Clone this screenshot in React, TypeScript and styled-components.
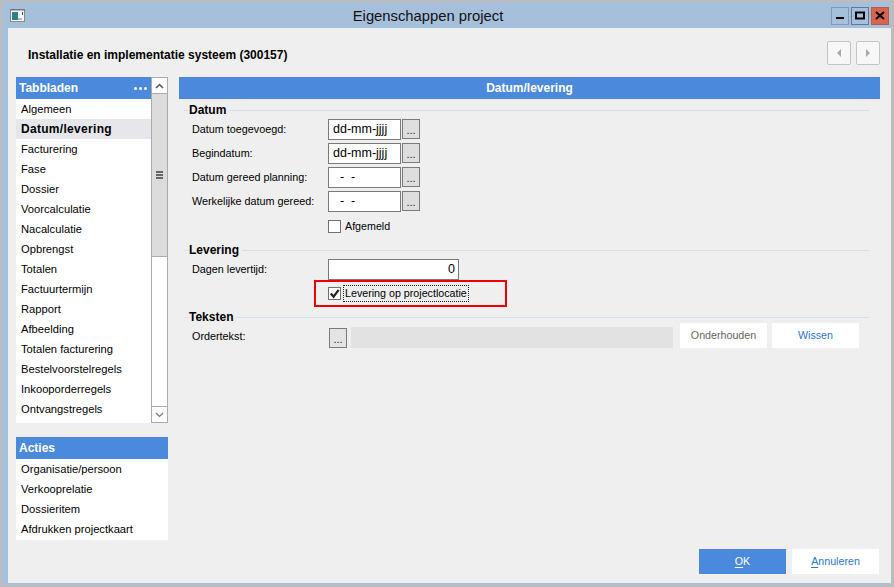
import { createGlobalStyle } from "styled-components";
import styled from "styled-components";

const GlobalStyle = createGlobalStyle`
  html, body { margin: 0; padding: 0; background: #bcbcbc; }
  body { font-family: "Liberation Sans", Arial, sans-serif; font-size: 12px; color: #000; }
`;

/* ── Window frame ── */

const Win = styled.div`
  width: 894px;
  height: 587px;
  box-sizing: border-box;
  padding: 2px 3px 2px 2px;
  background: #bcbcbc;
  overflow: hidden;
`;

const Frame = styled.div`
  height: 583px;
  box-sizing: border-box;
  padding: 0 0 2px 6px;
  background: #a6c0dc;
  display: flex;
  flex-direction: column;
`;

const TitleBar = styled.div`
  height: 26px;
  flex: none;
  display: flex;
  align-items: center;
  position: relative;
`;

const AppIcon = styled.svg`
  width: 15px;
  height: 13px;
  margin: 1px 0 0 2px;
`;

const Title = styled.div`
  position: absolute;
  left: 0;
  right: 0;
  top: 0;
  line-height: 29px;
  text-align: center;
  font-size: 14.8px;
  color: #111;
  padding-right: 43px;
`;

const WinButtons = styled.div`
  margin: 2px 2px 0 auto;
  display: flex;
  gap: 2px;
`;

const WinButton = styled.div<{ $kind?: "max" | "close" }>`
  width: 18px;
  height: 18px;
  box-sizing: border-box;
  display: flex;
  align-items: center;
  justify-content: center;
  border: 1px solid ${({ $kind }) => ($kind === "close" ? "#b85a48" : $kind === "max" ? "#5f7a97" : "#7f9ab8")};
  background: ${({ $kind }) => ($kind === "close" ? "#d8654f" : "#a6c0dc")};
`;

const Client = styled.div`
  flex: 1;
  background: #efefef;
  display: flex;
  flex-direction: column;
  padding: 0 11px 9px 8px;
  min-height: 0;
`;

/* ── Project header ── */

const ProjectRow = styled.div`
  height: 49px;
  flex: none;
  display: flex;
  align-items: center;
  padding-left: 12px;
`;

const ProjectName = styled.div`
  font-weight: bold;
  font-size: 12px;
  margin-top: 4px;
`;

const NavButtons = styled.div`
  margin-left: auto;
  display: flex;
  gap: 5px;
`;

const NavButton = styled.div`
  width: 24px;
  height: 24px;
  box-sizing: border-box;
  border: 1px solid #c4c4c4;
  border-radius: 2px;
  background: #f7f7f7;
  display: flex;
  align-items: center;
  justify-content: center;
`;

const Body = styled.div`
  flex: 1;
  display: flex;
  gap: 11px;
  min-height: 0;
`;

/* ── Left column ── */

const Side = styled.div`
  width: 152px;
  flex: none;
  display: flex;
  flex-direction: column;
  gap: 14px;
`;

const SideList = styled.div`
  display: flex;
  background: #fff;
  height: 346px;
`;

const SideItems = styled.div`
  flex: 1;
  min-width: 0;
`;

const SideHead = styled.div`
  height: 22px;
  background: #4a89dc;
  color: #fff;
  font-weight: bold;
  font-size: 12px;
  line-height: 22px;
  padding-left: 3px;
  display: flex;
  align-items: center;
  justify-content: space-between;
`;

const Dots = styled.span`
  display: flex;
  gap: 2px;
  margin-right: 4px;
  & > i { width: 3px; height: 3px; border-radius: 50%; background: #fff; }
`;

const SideItem = styled.div<{ $active?: boolean }>`
  height: 20px;
  line-height: 20px;
  padding-left: 5px;
  font-size: ${({ $active }) => ($active ? "12px" : "11.2px")};
  letter-spacing: ${({ $active }) => ($active ? "0.3px" : "0")};
  white-space: nowrap;
  background: ${({ $active }) => ($active ? "#e6e7ea" : "transparent")};
  font-weight: ${({ $active }) => ($active ? "bold" : "normal")};
`;

const ActionBox = styled.div`
  background: #fff;
  padding-bottom: 1px;
`;

const Scroll = styled.div`
  width: 17px;
  flex: none;
  box-sizing: border-box;
  border: 1px solid #ababab;
  border-top: none;
  border-bottom: none;
  display: flex;
  flex-direction: column;
  background: #fff;
`;

const ScrollEnd = styled.div`
  height: 17px;
  flex: none;
  margin: 0 -1px;
  box-sizing: border-box;
  border: 1px solid #ababab;
  background: #fff;
  display: flex;
  align-items: center;
  justify-content: center;
`;

const ScrollThumb = styled.div`
  height: 163px;
  flex: none;
  background: #dcdcdc;
  border-bottom: 1px solid #ababab;
  box-sizing: border-box;
  display: flex;
  align-items: center;
  justify-content: center;
`;

const ScrollGap = styled.div`
  flex: 1;
`;

/* ── Main panel ── */

const Main = styled.div`
  flex: 1;
  min-width: 0;
  display: flex;
  flex-direction: column;
`;

const MainHead = styled.div`
  height: 22px;
  flex: none;
  background: #4a89dc;
  color: #fff;
  font-weight: bold;
  font-size: 12px;
  line-height: 22px;
  text-align: center;
`;

const Form = styled.div`
  flex: 1;
  min-height: 0;
  display: flex;
  flex-direction: column;
  padding: 4px 11px 0 2px;
`;

const Legend = styled.div<{ $gap?: number }>`
  height: 14px;
  margin-top: ${({ $gap }) => $gap ?? 0}px;
  display: flex;
  align-items: center;
  gap: 3px;
  font-weight: bold;
  font-size: 12px;
  padding-left: 8px;
  position: relative;

  &::before {
    content: "";
    position: absolute;
    left: 3px;
    width: 4px;
    height: 1px;
    background: #d5dfe8;
  }
  &::after {
    content: "";
    flex: 1;
    height: 1px;
    background: #d5dfe8;
  }
`;

const Rows = styled.div`
  display: flex;
  flex-direction: column;
  padding-left: 11px;
`;

const Row = styled.div<{ $h?: number }>`
  display: flex;
  align-items: center;
  height: ${({ $h }) => $h ?? 24}px;
`;

const Label = styled.div`
  width: 136px;
  flex: none;
  font-size: 10.8px;
  white-space: nowrap;
`;

const Input = styled.div<{ $wide?: boolean }>`
  width: ${({ $wide }) => ($wide ? 131 : 73)}px;
  height: 21px;
  box-sizing: border-box;
  border: 1px solid #7a7a7a;
  background: #fff;
  font-size: 12.5px;
  line-height: 19px;
  padding: 0 3px 0 4px;
  text-align: ${({ $wide }) => ($wide ? "right" : "left")};
  white-space: pre;
`;

const DotsButton = styled.div`
  width: 18px;
  height: 20px;
  margin-left: 1px;
  box-sizing: border-box;
  border: 1px solid #7a7a7a;
  background: #dedede;
  font-size: 11px;
  line-height: 20px;
  text-align: center;
  color: #222;
`;

const CheckLabel = styled.div<{ $focus?: boolean }>`
  font-size: 10.7px;
  margin-left: 3px;
  line-height: 15px;
  padding: 0 1px;
  outline: ${({ $focus }) => ($focus ? "1px dotted #222" : "none")};
`;

const CheckBox = styled.div`
  width: 13px;
  height: 13px;
  box-sizing: border-box;
  border: 1px solid #707070;
  background: #fff;
  position: relative;
`;

const Highlight = styled.div`
  position: absolute;
  left: -14px;
  top: -6px;
  width: 193px;
  height: 27px;
  box-sizing: border-box;
  border: 2px solid #ee0000;
  pointer-events: none;
`;

const HighlightWrap = styled.div`
  position: relative;
  display: flex;
  align-items: center;
  margin-top: 2px;
`;

const Spacer = styled.div`
  width: 136px;
  flex: none;
`;

const TextField = styled.div`
  width: 322px;
  height: 21px;
  flex: none;
  margin: 4px 0 0 4px;
  background: #e2e2e2;
`;

const FlatButton = styled.div<{ $tone?: "grey" | "blue" | "primary" }>`
  width: 87px;
  height: 25px;
  box-sizing: border-box;
  flex: none;
  text-align: center;
  line-height: 25px;
  font-size: 10.7px;
  background: ${({ $tone }) => ($tone === "primary" ? "#4a89dc" : "#fff")};
  color: ${({ $tone }) => ($tone === "primary" ? "#fff" : $tone === "grey" ? "#666" : "#2a76d8")};

  & u { text-underline-offset: 2px; }
`;

const OrderRow = styled(Row)`
  height: 25px;
  margin-top: -1px;
`;

const OrderDots = styled(DotsButton)`
  background: #e4e4e4;
  margin-top: 4px;
`;

const OrderButtons = styled.div`
  display: flex;
  gap: 5px;
  margin-left: 7px;
`;

const Footer = styled.div`
  margin: auto -10px 0 0;
  display: flex;
  justify-content: flex-end;
  gap: 6px;
`;

const tabs = [
  "Algemeen",
  "Datum/levering",
  "Facturering",
  "Fase",
  "Dossier",
  "Voorcalculatie",
  "Nacalculatie",
  "Opbrengst",
  "Totalen",
  "Factuurtermijn",
  "Rapport",
  "Afbeelding",
  "Totalen facturering",
  "Bestelvoorstelregels",
  "Inkooporderregels",
  "Ontvangstregels",
];

const actions = ["Organisatie/persoon", "Verkooprelatie", "Dossieritem", "Afdrukken projectkaart"];

const dateRows = [
  { label: "Datum toegevoegd:", value: "dd-mm-jjjj" },
  { label: "Begindatum:", value: "dd-mm-jjjj" },
  { label: "Datum gereed planning:", value: "  -  -" },
  { label: "Werkelijke datum gereed:", value: "  -  -" },
];

export default function App() {
  return (
    <Win>
      <GlobalStyle />
      <Frame>
        <TitleBar>
          <AppIcon viewBox="0 0 15 13">
            <rect x="0.5" y="0.5" width="14" height="12" fill="#f4f4f4" stroke="#8a8a8a" />
            <rect x="0" y="0" width="15" height="1.5" fill="#777" />
            <rect x="2" y="3" width="6" height="8" fill="#2f7f86" />
            <rect x="8" y="9" width="4" height="2" fill="#b8b8b8" />
            <rect x="12" y="3" width="1" height="3" fill="#2a4f9a" />
          </AppIcon>
          <Title>Eigenschappen project</Title>
          <WinButtons>
            <WinButton>
              <svg width="10" height="10" viewBox="0 0 10 10"><rect x="1" y="6" width="8" height="2" fill="#000" /></svg>
            </WinButton>
            <WinButton $kind="max">
              <svg width="10" height="10" viewBox="0 0 10 10"><rect x="1" y="1.5" width="8" height="6" fill="none" stroke="#000" strokeWidth="2" /></svg>
            </WinButton>
            <WinButton $kind="close">
              <svg width="10" height="10" viewBox="0 0 10 10"><path d="M1 1l8 7M9 1L1 8" stroke="#000" strokeWidth="2.2" /></svg>
            </WinButton>
          </WinButtons>
        </TitleBar>
        <Client>
          <ProjectRow>
            <ProjectName>Installatie en implementatie systeem (300157)</ProjectName>
            <NavButtons>
              <NavButton>
                <svg width="6" height="8" viewBox="0 0 6 8"><path d="M5 0v8L1 4z" fill="#a8a8a8" /></svg>
              </NavButton>
              <NavButton>
                <svg width="6" height="8" viewBox="0 0 6 8"><path d="M1 0v8l4-4z" fill="#a8a8a8" /></svg>
              </NavButton>
            </NavButtons>
          </ProjectRow>
          <Body>
            <Side>
              <SideList>
                <SideItems>
                  <SideHead>
                    Tabbladen
                    <Dots><i /><i /><i /></Dots>
                  </SideHead>
                  {tabs.map((t, i) => (
                    <SideItem key={t} $active={i === 1}>{t}</SideItem>
                  ))}
                </SideItems>
                <Scroll>
                  <ScrollEnd>
                    <svg width="9" height="6" viewBox="0 0 9 6"><path d="M1 5l3.5-3.5L8 5" fill="none" stroke="#555" strokeWidth="1.5" /></svg>
                  </ScrollEnd>
                  <ScrollThumb>
                    <svg width="7" height="8" viewBox="0 0 7 8"><path d="M0 1h7M0 4h7M0 7h7" stroke="#666" strokeWidth="2" /></svg>
                  </ScrollThumb>
                  <ScrollGap />
                  <ScrollEnd>
                    <svg width="9" height="6" viewBox="0 0 9 6"><path d="M1 1l3.5 3.5L8 1" fill="none" stroke="#777" strokeWidth="1.2" /></svg>
                  </ScrollEnd>
                </Scroll>
              </SideList>
              <ActionBox>
                <SideHead>Acties</SideHead>
                {actions.map((a) => (
                  <SideItem key={a}>{a}</SideItem>
                ))}
              </ActionBox>
            </Side>
            <Main>
              <MainHead>Datum/levering</MainHead>
              <Form>
                <Legend>Datum</Legend>
                <Rows>
                  {dateRows.map((r) => (
                    <Row key={r.label}>
                      <Label>{r.label}</Label>
                      <Input>{r.value}</Input>
                      <DotsButton>...</DotsButton>
                    </Row>
                  ))}
                  <Row $h={26}>
                    <Spacer />
                    <CheckBox />
                    <CheckLabel>Afgemeld</CheckLabel>
                  </Row>
                </Rows>
                <Legend $gap={4}>Levering</Legend>
                <Rows>
                  <Row>
                    <Label>Dagen levertijd:</Label>
                    <Input $wide>0</Input>
                  </Row>
                  <Row $h={23}>
                    <Spacer />
                    <HighlightWrap>
                      <Highlight />
                      <CheckBox>
                        <svg width="11" height="11" viewBox="0 0 12 12" style={{ display: "block" }}>
                          <path d="M2 6l3 3.5L10.5 2" fill="none" stroke="#222" strokeWidth="2.4" />
                        </svg>
                      </CheckBox>
                      <CheckLabel $focus>Levering op projectlocatie</CheckLabel>
                    </HighlightWrap>
                  </Row>
                </Rows>
                <Legend $gap={6}>Teksten</Legend>
                <Rows>
                  <OrderRow>
                    <Label>Ordertekst:</Label>
                    <OrderDots>...</OrderDots>
                    <TextField />
                    <OrderButtons>
                      <FlatButton $tone="grey">Onderhouden</FlatButton>
                      <FlatButton $tone="blue">Wissen</FlatButton>
                    </OrderButtons>
                  </OrderRow>
                </Rows>
                <Footer>
                  <FlatButton $tone="primary"><u>O</u>K</FlatButton>
                  <FlatButton $tone="blue"><u>A</u>nnuleren</FlatButton>
                </Footer>
              </Form>
            </Main>
          </Body>
        </Client>
      </Frame>
    </Win>
  );
}
